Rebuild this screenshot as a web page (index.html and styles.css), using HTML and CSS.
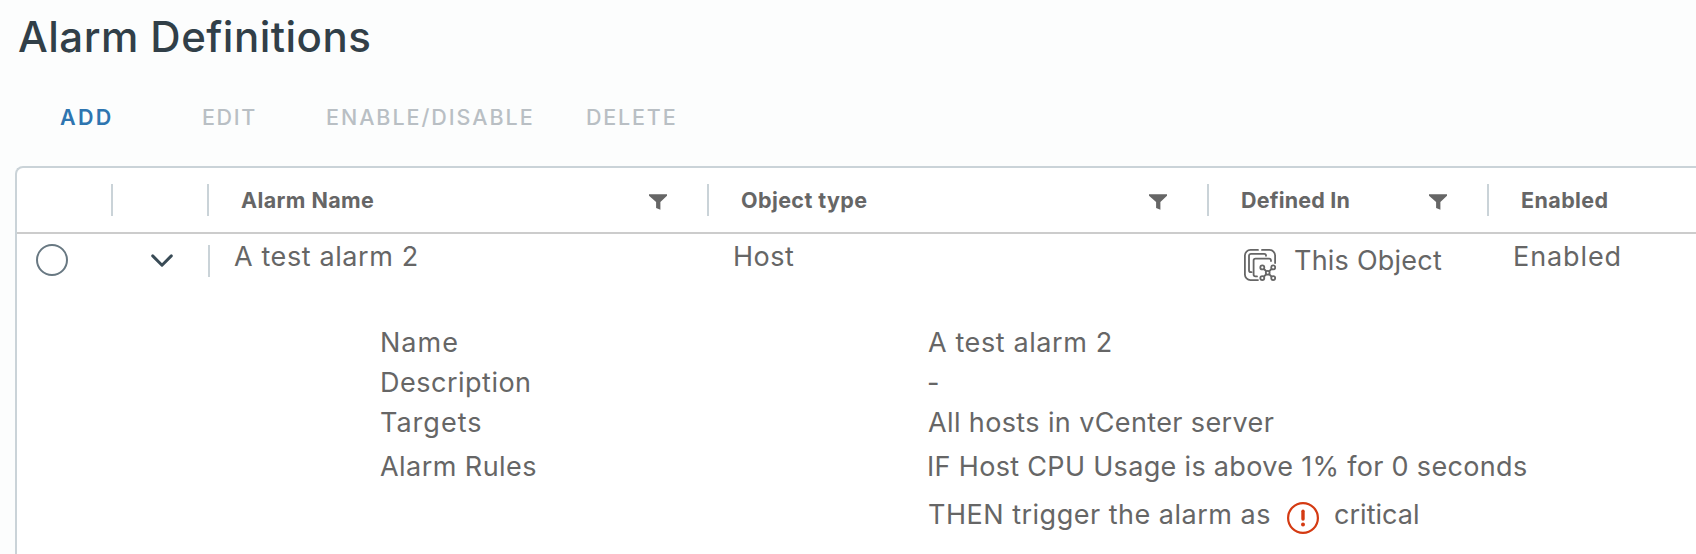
FILE: index.html
```html
<!DOCTYPE html>
<html lang="en">
<head>
<meta charset="utf-8">
<title>Alarm Definitions</title>
<link rel="stylesheet" href="styles.css">
</head>
<body>
<svg class="sprite" aria-hidden="true">
  <symbol id="funnel" viewBox="0 0 18 16"><path d="M0 .3h18v1.500l-6.600 6.200v7.800l-4.300-1.900v-5.900L0 1.800z"/></symbol>
</svg>
<h1 class="title">Alarm Definitions</h1>
<div class="toolbar">
  <button class="action action-add">ADD</button>
  <button class="action action-edit" disabled>EDIT</button>
  <button class="action action-toggle" disabled>ENABLE/DISABLE</button>
  <button class="action action-delete" disabled>DELETE</button>
</div>
<div class="datagrid">
  <div class="columns header">
    <div class="head"></div>
    <div class="head"></div>
    <div class="head"><span>Alarm Name</span><svg class="funnel"><use href="#funnel"/></svg></div>
    <div class="head"><span>Object type</span><svg class="funnel"><use href="#funnel"/></svg></div>
    <div class="head"><span class="defined">Defined In</span><svg class="funnel"><use href="#funnel"/></svg></div>
    <div class="head head-last"><span>Enabled</span></div>
  </div>
  <div class="columns row">
    <div class="select"><span class="radio"></span></div>
    <div class="expand">
      <svg class="chevron" viewBox="0 0 22 14" fill="none" stroke="#394b56" stroke-width="2.900" stroke-linecap="round" stroke-linejoin="round"><path d="M1.700 1.900 11 11.200l9.300-9.300"/></svg>
    </div>
    <div class="cell name">A test alarm 2</div>
    <div class="cell host">Host</div>
    <div class="cell object">
      <svg class="object-icon" viewBox="0 0 32 32" fill="none" stroke="#666" stroke-width="1.800" stroke-linecap="round">
        <path d="M14 .9H6.500A5.600 5.600 0 0 0 .9 6.500v19a5.600 5.600 0 0 0 5.600 5.600H14M18 .9h7.500a5.600 5.600 0 0 1 5.600 5.600V14"/>
        <path d="M22 6.800V6.500a1.700 1.700 0 0 0-1.700-1.700H7a2 2 0 0 0-2 2v14.400a2 2 0 0 0 2 2h.6"/>
        <path d="M27 12v-.5a1.900 1.900 0 0 0-1.900-1.900H11.500a1.900 1.900 0 0 0-1.900 1.900v14a1.900 1.900 0 0 0 1.900 1.900H13"/>
        <path d="m19 19 9.500 9.500M28.500 19 19 28.500"/>
        <g fill="#fff"><circle cx="18.300" cy="18.400" r="2"/><circle cx="29.200" cy="18.400" r="2"/><circle cx="18.300" cy="29.100" r="2"/><circle cx="29.200" cy="29.100" r="2"/><circle cx="23.700" cy="23.800" r="1.900"/></g>
      </svg>
      <span>This Object</span>
    </div>
    <div class="cell enabled">Enabled</div>
  </div>
  <dl class="details">
    <dt class="k-name">Name</dt><dd class="name">A test alarm 2</dd>
    <dt class="k-desc">Description</dt><dd class="dash">-</dd>
    <dt class="k-targets">Targets</dt><dd class="targets">All hosts in vCenter server</dd>
    <dt class="rule k-rules">Alarm Rules</dt><dd class="rule condition">IF Host CPU Usage is above 1% for 0 seconds</dd>
    <dd class="then">
      <span class="trigger">THEN trigger the alarm as</span>
      <svg class="critical-icon" viewBox="0 0 32 32"><circle cx="16" cy="16" r="14.900" fill="none" stroke="#d43a12" stroke-width="2.200"/><path d="M16 9.200v7.900" stroke="#d43a12" stroke-width="3.400" stroke-linecap="round"/><circle cx="16" cy="22.500" r="2" fill="#d43a12"/></svg>
      <span class="critical">critical</span>
    </dd>
  </dl>
</div>
</body>
</html>
```

FILE: styles.css
```css
* { box-sizing: border-box; }
body {
  margin: 0;
  height: 554px;
  overflow: hidden;
  display: flex;
  flex-direction: column;
  background: #fcfdfd;
  color: #666;
  font: 400 27px/40px Inter, "Liberation Sans", sans-serif;
  white-space: nowrap;
}
.sprite { display: none; }
.title {
  margin: 0;
  padding: 11px 0 0 18px;
  height: 95px;
  color: #313f48;
  font-size: 42px;
  font-weight: 550;
  line-height: 52px;
  letter-spacing: 0.48px;
}
.toolbar { display: flex; height: 71px; padding-left: 60px; }
.action {
  height: 44px;
  margin: 0;
  padding: 0;
  border: 0;
  background: none;
  color: #b9bfc4;
  font: 500 21.5px/44px Inter, "Liberation Sans", sans-serif;
  letter-spacing: 1.95px;
  text-align: left;
}
.action-add { width: 142px; color: #2e75b0; font-weight: 600; letter-spacing: 2.3px; }
.action-edit { width: 124px; letter-spacing: 1.6px; }
.action-toggle { width: 260px; }
.action-delete { letter-spacing: 1.8px; }
.datagrid {
  flex: 1;
  margin-left: 15px;
  border: solid #cad3d8;
  border-width: 2px 0 0 2px;
  border-top-left-radius: 8px;
  background: #fff;
}
.columns { display: grid; grid-template-columns: 96px 96px 500px 500px 280px 1fr; }
.header { padding: 16px 0; border-bottom: 2px solid #ccc; }
.head {
  display: flex;
  align-items: center;
  justify-content: space-between;
  height: 32px;
  padding: 0 40px 0 32px;
  border-right: 2px solid #cad3d8;
  font-size: 21.5px;
  font-weight: 700;
  line-height: 32px;
  letter-spacing: 0.4px;
}
.head-last { border: 0; }
.defined { letter-spacing: 0.2px; }
.funnel { width: 18px; height: 16px; margin-top: 4px; fill: #666; }
.row { height: 89px; padding-top: 3px; }
.select { padding: 7px 0 0 19px; }
.radio { display: block; width: 32px; height: 32px; border: 2px solid #687882; border-radius: 50%; }
.expand {
  width: 97px;
  height: 32px;
  margin-top: 8px;
  padding: 9px 0 0 38px;
  border-right: 2px solid #cad3d8;
}
.chevron { display: block; width: 22px; height: 14px; }
.cell { padding-left: 24px; }
.name { letter-spacing: 0.6px; }
.cell.name { padding-left: 25px; }
.host { letter-spacing: 0.5px; }
.object { display: flex; gap: 18px; padding: 4px 0 0 35px; letter-spacing: 0.23px; }
.object-icon { width: 32px; height: 32px; margin-top: 8px; }
.enabled { letter-spacing: 0.9px; }
.details {
  display: grid;
  grid-template-columns: 548px 1fr;
  margin: 0;
  padding-left: 363px;
}
.details dd { margin: 0; }
.k-name { letter-spacing: 1px; }
.k-desc { letter-spacing: 0.5px; }
.k-targets { letter-spacing: 1px; }
.k-rules { letter-spacing: 0.45px; }
.details .dash { margin-left: -1px; }
.targets { letter-spacing: 0.38px; }
.details .condition { margin-left: -1px; letter-spacing: 0.32px; }
.rule { padding-top: 4px; }
.then { grid-column: 2; display: flex; padding-top: 8px; }
.trigger { width: 359px; letter-spacing: 0.5px; }
.critical-icon { width: 32px; height: 32px; margin: 7px 15px 0 0; }
.critical { letter-spacing: 0.03px; }
```
